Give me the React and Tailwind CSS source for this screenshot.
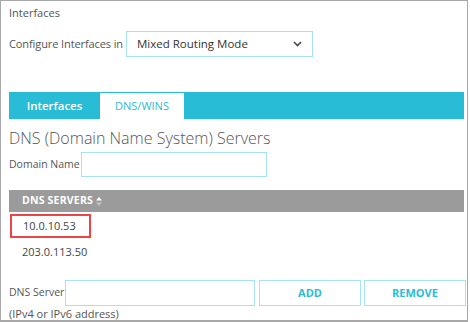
import React from "react";

export default function App() {
  return (
    <div className="w-[470px] h-[322px] bg-white font-['Open_Sans',sans-serif] text-[#555]">
      <div className="w-[468px] h-[322px] border border-[#a8a8a8] border-b-2 pl-[8px] pr-[2px] pt-[4px]">
        <div className="text-[11px] leading-[16px]">Interfaces</div>

        {/* Mode select */}
        <div className="flex items-center mt-[10px]">
          <span className="text-[11px] w-[117px] shrink-0 whitespace-nowrap tracking-[-0.1px]">Configure Interfaces in</span>
          <div className="w-[187px] h-[26px] border border-[#a6e3ee] flex items-center justify-between px-[10px]">
            <span className="text-[11.5px] text-[#333] whitespace-nowrap">Mixed Routing Mode</span>
            <svg width="9" height="6" viewBox="0 0 9 6">
              <path d="M1 1l3.5 3.5L8 1" stroke="#444" strokeWidth="1.6" fill="none" />
            </svg>
          </div>
        </div>

        {/* Tabs */}
        <div className="mt-[35px] h-[27px] bg-[#29bcd6] flex items-end mr-[1px]">
          <div className="w-[91px] h-full flex items-center justify-center text-white text-[11.5px] font-semibold">
            Interfaces
          </div>
          <div className="w-[84px] h-[26px] bg-white flex items-center justify-center text-[#29bcd6] text-[11px]">
            DNS/WINS
          </div>
        </div>

        <h2 className="mt-[9px] text-[16px] leading-[20px] text-[#555] font-light whitespace-nowrap">
          DNS (Domain Name System) Servers
        </h2>

        <div className="flex items-center mt-[4px]">
          <span className="text-[10.5px] w-[72px] shrink-0 whitespace-nowrap">Domain Name</span>
          <div className="w-[186px] h-[25px] border border-[#a6e3ee]" />
        </div>

        {/* Server table */}
        <div className="mt-[13px] h-[22px] bg-[#9b9b9b] flex items-center pl-[13px] mr-[1px]">
          <span className="text-white text-[10.5px] font-bold tracking-[0.2px]">DNS SERVERS</span>
          <svg className="ml-[3px]" width="6" height="9" viewBox="0 0 6 9">
            <path d="M0 3.5L3 0l3 3.5z" fill="#fff" />
            <path d="M0 5.5L3 9l3-3.5z" fill="#c4c4c4" />
          </svg>
        </div>
        <div className="ml-[1px] mt-[2px] w-[81px] h-[24px] border-2 border-[#ee4444] flex items-center pl-[11px] text-[11px] text-[#444]">
          10.0.10.53
        </div>
        <div className="h-[30px] flex items-center pl-[13px] text-[11px] text-[#444] mt-[-1px]">
          203.0.113.50
        </div>

        <div className="flex items-center mt-[13px] mr-[1px]">
          <span className="text-[10.5px] w-[56px] shrink-0 whitespace-nowrap">DNS Server</span>
          <div className="w-[190px] h-[26px] border border-[#a6e3ee] shrink-0" />
          <button className="ml-[4px] w-[102px] h-[26px] border border-[#a6e3ee] text-[#29bcd6] text-[11px] font-bold shrink-0">
            ADD
          </button>
          <button className="ml-[3px] w-[102px] h-[26px] border border-[#a6e3ee] text-[#29bcd6] text-[11px] font-bold shrink-0">
            REMOVE
          </button>
        </div>
        <div className="text-[11px] leading-[14px] mt-[1px] whitespace-nowrap">(IPv4 or IPv6 address)</div>
      </div>
    </div>
  );
}
